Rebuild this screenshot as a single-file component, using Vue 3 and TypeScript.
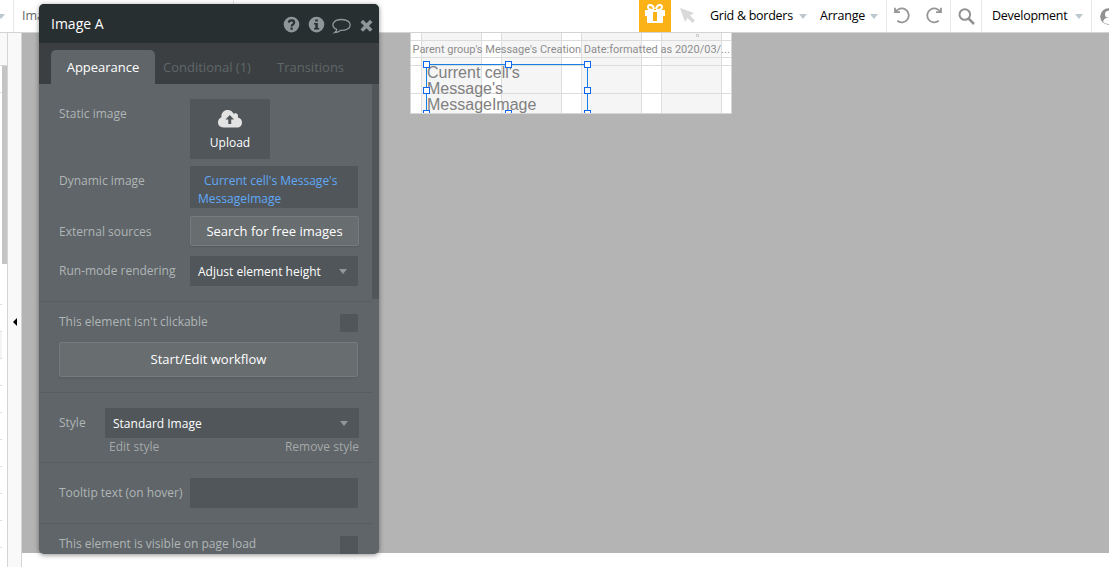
<script setup lang="ts">
const rows: number[] = [304, 331, 358, 385, 412, 439, 466, 493, 520, 547]
const columns: number[] = [0, 1, 2, 3]
const rules: number[] = [7, 24, 32, 60]
const handles: { x: number; y: number }[] = [
  { x: 16, y: 31 }, { x: 98, y: 31 }, { x: 177, y: 31 },
  { x: 16, y: 57 }, { x: 177, y: 57 },
  { x: 16, y: 80 }, { x: 98, y: 80 }, { x: 177, y: 80 },
]
</script>

<template>
  <div class="editor">
    <header class="toolbar">
      <div class="cell page-a"><i class="caret"></i></div>
      <div class="cell page-b">Ima</div>
      <div class="gift">
        <svg width="22" height="20" viewBox="0 0 22 20">
          <path d="M10 6C7 6 4 5 4 3C4 0 9 0 10 5M12 6C15 6 18 5 18 3C18 0 13 0 12 5" fill="none" stroke="#fff" stroke-width="2" />
          <path d="M1 6H21V12H19V18Q19 19 18 19H4Q3 19 3 18V12H1Z" fill="#fff" />
          <path d="M9 8H13V17H9Z" fill="#fbb216" />
        </svg>
      </div>
      <svg class="pointer" width="16" height="16" viewBox="0 0 16 16"><path d="M0 0L14 5L10 7.5L15 12.5L12.5 15L7.5 10L5 14Z" fill="#d9d9d9" /></svg>
      <span class="menu grid-menu">Grid &amp; borders</span><i class="caret c1"></i>
      <span class="menu arrange">Arrange</span><i class="caret c2"></i>
      <div class="cell history">
        <svg width="16" height="17" viewBox="0 0 16 17" fill="none" stroke="#969696" stroke-width="1.8"><path d="M1 .8V5.2H6M1.6 5A7 7 0 1 1 3.3 13.8" /></svg>
        <svg width="16" height="17" viewBox="0 0 16 17" fill="none" stroke="#969696" stroke-width="1.8"><path d="M15 .8V5.2H10M14.4 5A7 7 0 1 0 12.7 13.8" /></svg>
      </div>
      <div class="cell search">
        <svg width="17" height="17" viewBox="0 0 17 17" fill="none" stroke="#929292"><circle cx="6.8" cy="6.5" r="5.3" stroke-width="2" /><path d="M10.5 10.5L16 16" stroke-width="2.5" /></svg>
      </div>
      <div class="cell version"><span class="menu">Development</span><i class="caret"></i></div>
      <svg class="user" width="17" height="17" viewBox="0 0 17 17"><circle cx="8.5" cy="8.5" r="8.3" fill="#929292" /><circle cx="8.5" cy="6.2" r="3.5" fill="#fff" /><path d="M3 14Q4 10 7 10H10Q13 10 14 14Q8 18 3 14Z" fill="#fff" /></svg>
    </header>

    <main class="workspace">
      <aside class="tree">
        <div class="tree-head"></div>
        <i class="tree-active"></i>
        <i v-for="y in rows" :key="y" class="tree-line" :style="{ top: y - 33 + 'px' }"></i>
        <i class="tree-line first"></i>
        <i class="thumb"></i>
      </aside>
      <div class="collapse"><i></i></div>
      <section class="canvas">
        <div class="page">
          <i v-for="c in columns" :key="c" class="column" :style="{ left: 10 + c * 80 + 'px' }"></i>
          <i v-for="r in rules" :key="r" class="rule" :style="{ top: r + 'px' }"></i>
          <i class="dot"></i>
          <div class="date">Parent group's Message's Creation Date:formatted as 2020/03/...</div>
          <div class="image-element">Current cell's<br>Message's<br>MessageImage</div>
          <i v-for="(h, i) in handles" :key="i" class="handle" :style="{ left: h.x + 'px', top: h.y + 'px' }"></i>
        </div>
      </section>
    </main>

    <section class="panel">
      <header class="title">
        <span>Image A</span>
        <svg width="90" height="18" viewBox="0 0 90 18">
          <g fill="#8d9799">
            <circle cx="8.5" cy="8.6" r="7.8" /><circle cx="33.5" cy="8.6" r="7.8" />
            <path d="M77.5 6.2L80 3.7L83.5 7.2L87 3.7L89.5 6.2L86 9.7L89.5 13.2L87 15.7L83.5 12.2L80 15.7L77.5 13.2L81 9.7Z" />
          </g>
          <path d="M5.8 6.7Q6 4.4 8.6 4.4Q11.2 4.4 11.2 6.6Q11.2 7.8 9.9 8.5Q8.6 9.1 8.6 10.4" fill="none" stroke="#282f31" stroke-width="2.1" />
          <path d="M7.5 11.6H9.7V13.8H7.5ZM32.2 3.4H34.8V5.6H32.2ZM31 6.9H34.8V11.9H36.2V13.6H31V11.9H32.3V8.6H31Z" fill="#282f31" />
          <path d="M53.7 13.4C46.7 10.5 49.7 3.5 58.7 3.5C64 3.5 67.2 6 67.2 9C67.2 12.2 63.2 14.6 57.5 14.4Q54.7 16.6 51.5 16.7Q53.7 15.3 53.7 13.4Z" fill="none" stroke="#8d9799" stroke-width="1.3" />
        </svg>
      </header>
      <nav class="tabs"><b>Appearance</b><span class="t2">Conditional (1)</span><span>Transitions</span></nav>
      <div class="body">
        <div class="group g1">
          <div class="row static"><label>Static image</label>
            <div class="upload">
              <svg width="24" height="18" viewBox="0 0 24 18"><path d="M5.5 17.5C2 17.5 0 15.2 0 12.3Q0 9 3.4 7.3C3 2.7 6.1 0 9.7 0Q13.9 0 15.6 3.8C18.2 2 21 4.4 19.8 7.5C22.7 8 24 10.1 24 12.5C24 15.5 22 17.5 19 17.5Z" fill="#e3e3e3" /><path d="M11.8 5L16 9.4H13.2V14H10.3V9.4H7.5Z" fill="#50565a" /></svg>
              <span>Upload</span>
            </div>
          </div>
          <div class="row dynamic"><label>Dynamic image</label><div class="expression">Current cell's Message's MessageImage</div></div>
          <div class="row external"><label>External sources</label><button>Search for free images</button></div>
          <div class="row run"><label>Run-mode rendering</label><div class="select">Adjust element height<i class="caret"></i></div></div>
        </div>
        <div class="group g2">
          <div class="check-row"><label>This element isn't clickable</label><i class="check"></i></div>
          <button class="workflow">Start/Edit workflow</button>
        </div>
        <div class="group g3">
          <div class="style-row"><label>Style</label><div class="select">Standard Image<i class="caret"></i></div></div>
          <div class="links"><span>Edit style</span><span>Remove style</span></div>
        </div>
        <div class="group g4"><label>Tooltip text (on hover)</label><div class="input"></div></div>
        <div class="group g5"><label>This element is visible on page load</label><i class="check"></i></div>
        <i class="panel-thumb"></i>
      </div>
    </section>
  </div>
</template>

<style>
body { margin: 0; overflow: hidden; }
</style>
<style scoped>
* { box-sizing: border-box; }
.editor { position: relative; width: 1109px; height: 567px; overflow: hidden; background: #fff; font: 12px/18px "Open Sans", sans-serif; color: #000; }
.toolbar { display: flex; align-items: center; height: 33px; border-bottom: 1px solid #d3d3d3; font-size: 12.5px; white-space: nowrap; overflow: hidden; }
.toolbar > * { flex-shrink: 0; }
.cell { height: 32px; display: flex; align-items: center; border-right: 1px solid #e7e7e7; }
.caret { width: 0; height: 0; border: 4px solid transparent; border-top: 5px solid #bdc8ce; border-bottom: 0; flex-shrink: 0; }
.page-a { width: 14px; }
.page-a .caret { margin-left: -3px; }
.page-b { width: 220px; padding-left: 8px; color: #666; }
.gift { width: 32px; height: 32px; margin-left: 405px; padding: 4px 5px; background: #fbb216; }
.pointer { margin-left: 9px; }
.grid-menu { margin-left: 14px; width: 84px; letter-spacing: -.27px; }
.c1 { margin-left: 5px; }
.arrange { width: 46px; margin-left: 13px; letter-spacing: -.2px; }
.c2 { margin-left: 4px; }
.history { margin-left: 8px; width: 65px; border-left: 1px solid #e7e7e7; padding-left: 7px; gap: 16px; }
.history svg { margin-top: -2px; }
.search { width: 31px; padding-left: 7px; }
.version { width: 110px; padding-left: 10px; }
.version .menu { width: 76px; letter-spacing: -.27px; margin-top: -1px; }
.version .caret { margin-left: 7px; }
.user { margin-left: 8px; }
.workspace { display: flex; height: 534px; }
.tree { position: relative; width: 8px; border-right: 1px solid #d4d4d4; }
.tree-head { height: 33px; background: #f9f9f9; border-bottom: 1px solid #d8d8d8; }
.tree-line { position: absolute; left: 0; width: 2px; height: 1px; background: #ddd; }
.tree-line.first { top: 59px; }
.tree-active { position: absolute; left: 0; top: 299px; width: 2px; height: 26px; background: #f4f4f4; }
.thumb { position: absolute; left: 2px; top: 33px; width: 5px; height: 198px; background: #c4c4c4; }
.collapse { width: 14px; background: #f9f9f9; border-right: 1px solid #d4d4d4; padding: 285px 0 0 5px; }
.collapse i { display: block; width: 0; height: 0; border: 4px solid transparent; border-right: 4px solid #000; border-left: 0; }
.canvas { width: 1087px; height: 520px; background: #b4b4b4; padding-left: 388px; }
.page { position: relative; width: 322px; height: 81px; overflow: hidden; border: 1px solid #d6d6d6; border-top: 0; background: #fff; }
.column { position: absolute; top: 0; width: 61px; height: 81px; background: #f5f5f5; border: solid #dedede; border-width: 0 1px; }
.rule { position: absolute; left: 0; width: 320px; height: 1px; background: #dcdcdc; }
.dot { position: absolute; left: 285px; top: 1px; width: 3px; height: 3px; border: 1px solid #cfcfcf; }
.date { position: absolute; left: 1.5px; top: 8px; font: 11px/18px Roboto, sans-serif; color: #8d8d8d; white-space: nowrap; }
.image-element { position: absolute; left: 15px; top: 31px; width: 162px; height: 60px; border: 1px solid #1780e5; font: 16px/16px "Liberation Sans", sans-serif; color: #808080; }
.handle { position: absolute; width: 7px; height: 7px; margin: -3px 0 0 -4px; background: #fff; border: 1px solid #0b68ef; }
.panel { position: absolute; left: 39px; top: 4px; width: 340px; height: 550px; overflow: hidden; border-radius: 5px; background: #5f6568; box-shadow: 0 1px 5px rgba(0, 0, 0, .45); color: #fff; }
.title { display: flex; align-items: center; justify-content: space-between; height: 39px; padding: 0 6px 0 12px; background: #282f31; font-size: 14px; }
.title svg { margin-top: 2px; }
.tabs { display: flex; height: 41px; padding: 7px 0 0 12px; background: #3b3f41; color: #5f676a; font-size: 13px; line-height: 35px; white-space: nowrap; }
.tabs b { width: 104px; height: 34px; border-radius: 5px 5px 0 0; background: #5f6568; color: #fff; text-align: center; font-weight: 500; }
.tabs span { padding-left: 8px; }
.tabs .t2 { width: 114px; }
.body { position: relative; height: 470px; overflow: hidden; }
.group { width: 333px; border-bottom: 1px solid #575d60; padding-left: 20px; }
label { color: #b0b5b7; white-space: nowrap; }
.g1 { height: 218px; padding-top: 15px; }
.row { display: flex; }
.row label { width: 131px; }
.static { height: 67px; }
.static label { padding-top: 6px; }
.upload { width: 80px; height: 60px; padding-top: 11px; background: #50565a; display: flex; flex-direction: column; align-items: center; }
.upload span { margin-top: 6px; font-weight: 500; }
.dynamic { height: 50px; }
.dynamic label { padding-top: 6px; }
.expression { width: 168px; height: 42px; padding: 6px 8px; text-indent: 6px; background: #50565a; color: #60a9f7; }
.external { height: 40px; }
.external label { padding-top: 7px; }
.run label { padding-top: 6px; }
button { width: 169px; height: 30px; padding: 0; border: 1px solid #757b7e; border-radius: 2px; background: #686d70; color: #fff; font: 13px/18px "Open Sans", sans-serif; box-shadow: 0 1px 2px rgba(0, 0, 0, .1); }
.select { width: 168px; height: 30px; display: flex; align-items: center; justify-content: space-between; padding: 1px 11px 0 8px; background: #50565a; white-space: nowrap; font-weight: 500; }
.select .caret { border-top-color: #91989a; }
.g2 { height: 91px; padding-top: 11px; }
.check-row { display: flex; justify-content: space-between; width: 299px; height: 29px; }
.check { width: 18px; height: 18px; margin-top: 1px; background: #50565a; }
.workflow { display: block; width: 299px; height: 35px; padding-bottom: 1px; }
.g3 { height: 70px; padding-top: 15px; }
.style-row { display: flex; }
.style-row label { width: 46px; padding-top: 6px; }
.style-row .select { width: 254px; }
.links { display: flex; justify-content: space-between; width: 250px; margin-left: 50px; color: #a5a8a9; }
.g4 { display: flex; height: 61px; padding-top: 15px; }
.g4 label { width: 131px; padding-top: 6px; }
.input { width: 168px; height: 30px; background: #50565a; }
.g5 { display: flex; justify-content: space-between; padding-top: 11px; padding-right: 14px; height: 50px; }
.panel-thumb { position: absolute; right: 0; top: 0; width: 7px; height: 215px; background: #50565a; }
</style>
